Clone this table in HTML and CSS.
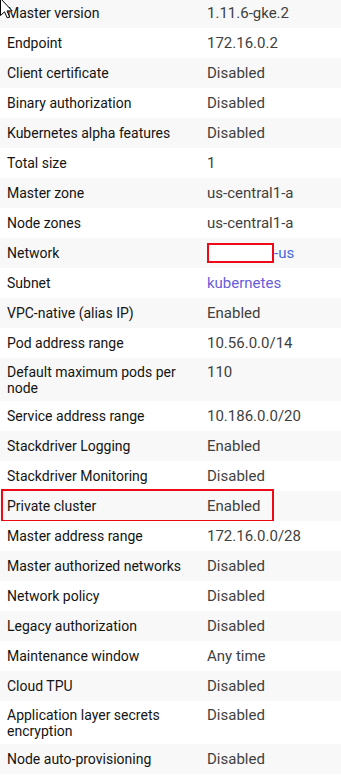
FILE: index.html
```html
<!DOCTYPE html>
<html lang="en">
<head>
<meta charset="utf-8">
<title>Cluster details</title>
<link rel="stylesheet" href="styles.css">
</head>
<body>
<div class="details">
  <div class="row"><div class="label">Master version</div><div class="value">1.11.6-gke.2</div></div>
  <div class="row"><div class="label">Endpoint</div><div class="value">172.16.0.2</div></div>
  <div class="row"><div class="label">Client certificate</div><div class="value">Disabled</div></div>
  <div class="row"><div class="label">Binary authorization</div><div class="value">Disabled</div></div>
  <div class="row"><div class="label">Kubernetes alpha features</div><div class="value">Disabled</div></div>
  <div class="row"><div class="label">Total size</div><div class="value">1</div></div>
  <div class="row"><div class="label">Master zone</div><div class="value">us-central1-a</div></div>
  <div class="row"><div class="label">Node zones</div><div class="value">us-central1-a</div></div>
  <div class="row"><div class="label">Network</div><div class="value"><span class="redacted"></span><a class="link" href="#">-us</a></div></div>
  <div class="row"><div class="label">Subnet</div><div class="value"><a class="link visited" href="#">kubernetes</a></div></div>
  <div class="row"><div class="label">VPC-native (alias IP)</div><div class="value">Enabled</div></div>
  <div class="row"><div class="label">Pod address range</div><div class="value">10.56.0.0/14</div></div>
  <div class="row tall"><div class="label">Default maximum pods per node</div><div class="value">110</div></div>
  <div class="row"><div class="label">Service address range</div><div class="value">10.186.0.0/20</div></div>
  <div class="row"><div class="label">Stackdriver Logging</div><div class="value">Enabled</div></div>
  <div class="row"><div class="label">Stackdriver Monitoring</div><div class="value">Disabled</div></div>
  <div class="row highlighted"><div class="label">Private cluster</div><div class="value">Enabled</div><span class="outline"></span></div>
  <div class="row"><div class="label">Master address range</div><div class="value">172.16.0.0/28</div></div>
  <div class="row"><div class="label">Master authorized networks</div><div class="value">Disabled</div></div>
  <div class="row"><div class="label">Network policy</div><div class="value">Disabled</div></div>
  <div class="row"><div class="label">Legacy authorization</div><div class="value">Disabled</div></div>
  <div class="row"><div class="label">Maintenance window</div><div class="value">Any time</div></div>
  <div class="row"><div class="label">Cloud TPU</div><div class="value">Disabled</div></div>
  <div class="row tall"><div class="label">Application layer secrets encryption</div><div class="value">Disabled</div></div>
  <div class="row"><div class="label">Node auto-provisioning</div><div class="value">Disabled</div></div>
</div>
<svg class="cursor" width="14" height="20" viewBox="0 0 14 20" aria-hidden="true">
  <path d="M0.5 -1.5 L0.5 15.5 L4.5 11.8 L7.2 17.8 L9.6 16.8 L7 10.9 L12.2 10.9 Z" fill="#fff" stroke="#000" stroke-width="1" stroke-linejoin="miter"/>
</svg>
</body>
</html>
```

FILE: styles.css
```css
html, body {
  margin: 0;
  padding: 0;
  background: #ffffff;
}

body {
  font-family: Roboto, "Liberation Sans", Arial, sans-serif;
  font-size: 14px;
  width: 341px;
  overflow: hidden;
}

.details {
  margin-top: -2px;
}

.row {
  position: relative;
  display: grid;
  grid-template-columns: 207px 1fr;
  background: #ffffff;
}

.row:nth-child(odd) {
  background: #f8f8f8;
}

.label,
.value {
  padding: 7px 0;
  line-height: 16px;
}

/* rows whose label wraps onto two lines sit a little tighter */
.row.tall .label,
.row.tall .value {
  padding: 5.5px 0;
}

.label {
  padding-left: 7px;
  padding-right: 14px;
  color: #141414;
}

.row.tall .label {
  padding-left: 7px;
  padding-right: 14px;
}

.value {
  font-size: 15px;
  color: #3f3f3f;
}

.link {
  color: #4468e0;
  text-decoration: none;
}

.link.visited {
  color: #6a5cd8;
}

.redacted {
  display: inline-block;
  box-sizing: border-box;
  width: 67px;
  height: 20px;
  margin: -4px 0 -4px;
  vertical-align: middle;
  border: 2px solid #ee0a14;
  background: #ffffff;
  position: relative;
  top: -1px;
}

/* red frame drawn around the highlighted row */
.outline {
  position: absolute;
  left: 1px;
  top: -2px;
  width: 273px;
  height: 33px;
  box-sizing: border-box;
  border: 2px solid #ee0a14;
  pointer-events: none;
}

.cursor {
  position: absolute;
  left: 0;
  top: 0;
}
```
